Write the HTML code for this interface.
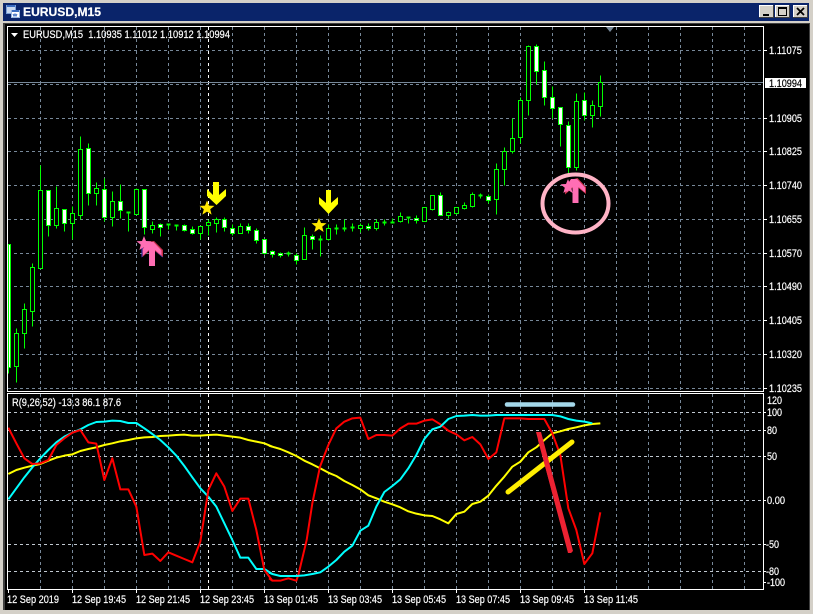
<!DOCTYPE html>
<html>
<head>
<meta charset="utf-8">
<style>
html,body{margin:0;padding:0;background:#000;width:813px;height:614px;overflow:hidden}
svg{display:block;position:absolute;left:0;top:0}
text{font-family:"Liberation Sans",sans-serif;font-size:11px;fill:#fff;stroke:#fff;stroke-width:.2px}
</style>
</head>
<body>
<svg width="813" height="614" viewBox="0 0 813 614" xmlns="http://www.w3.org/2000/svg">
<defs>
<clipPath id="c1"><rect x="8" y="27" width="755" height="364"/></clipPath>
<clipPath id="c2"><rect x="8" y="394" width="755" height="195"/></clipPath>
</defs>
<!-- window frame -->
<rect width="813" height="614" fill="#d4d0c8"/>
<rect x="3" y="3" width="806" height="18" fill="#0a246a"/>
<rect x="3" y="21" width="806" height="2" fill="#d4d0c8"/>
<rect x="3" y="23" width="807" height="587" fill="#404040"/>
<rect x="5" y="24" width="804" height="586" fill="#000"/>
<!-- title icon -->
<rect x="6.5" y="5.5" width="9" height="8" fill="#c8d8f0" stroke="#7aa0d8"/>
<rect x="7" y="5" width="8" height="2" fill="#3a6cc0"/>
<rect x="11.5" y="10.5" width="8" height="7" fill="#fff" stroke="#9ab8e0"/>
<rect x="12" y="10" width="7" height="2" fill="#3a6cc0"/>
<path d="M13 14l1 2 1-2 1 2 1-2" fill="none" stroke="#3a6cc0"/>
<text x="23" y="16" style="font-size:12px;font-weight:bold" textLength="78" lengthAdjust="spacingAndGlyphs">EURUSD,M15</text>
<!-- buttons -->
<g>
<rect x="759" y="5" width="15" height="13" fill="#d4d0c8"/>
<path d="M759.5 18V5.5H774" fill="none" stroke="#fff"/><path d="M759 17.500H773.500V5" fill="none" stroke="#404040"/>
<rect x="763" y="14" width="6" height="2" fill="#000"/>
<rect x="775" y="5" width="15" height="13" fill="#d4d0c8"/>
<path d="M775.500 18V5.500H790" fill="none" stroke="#fff"/><path d="M775 17.500H789.500V5" fill="none" stroke="#404040"/>
<rect x="778.500" y="7.500" width="8" height="8" fill="none" stroke="#000"/><rect x="778" y="7" width="9" height="2" fill="#000"/>
<rect x="793" y="5" width="15" height="13" fill="#d4d0c8"/>
<path d="M793.500 18V5.500H808" fill="none" stroke="#fff"/><path d="M793 17.500H807.500V5" fill="none" stroke="#404040"/>
<path d="M797 8l7 7M804 8l-7 7" stroke="#000" stroke-width="1.800" fill="none"/>
</g>
<!-- panels -->
<rect x="7.500" y="26.500" width="756" height="365" fill="#000" stroke="#fff"/>
<rect x="7.500" y="393.500" width="756" height="196" fill="#000" stroke="#fff"/>
<!-- grid main -->
<g clip-path="url(#c1)" shape-rendering="crispEdges">
<path fill="none" stroke="#778899" stroke-dasharray="3 3" d="M8 50.500H763M8 84.500H763M8 118.500H763M8 151.500H763M8 185.500H763M8 219.500H763M8 253.500H763M8 286.500H763M8 320.500H763M8 354.500H763M8 388.500H763M40.500 27V391M72.500 27V391M104.500 27V391M136.500 27V391M168.500 27V391M200.500 27V391M232.500 27V391M264.500 27V391M296.500 27V391M328.500 27V391M360.500 27V391M392.500 27V391M424.500 27V391M456.500 27V391M488.500 27V391M520.500 27V391M552.500 27V391M584.500 27V391M616.500 27V391M648.500 27V391M680.500 27V391M712.500 27V391M744.500 27V391"/>
<path fill="none" stroke="#fff" stroke-dasharray="3 3" d="M208.500 27V391"/>
<path fill="none" stroke="#778899" d="M8 82.500H763"/>
<g transform="translate(.5,.5)">
<path fill="none" stroke="#0f0" d="M8 244V373M16 328V382M24 303V348M32 263V326M40 165V268M48 190V236M56 186V228M64 209V231M72 206V239M80 136V219M88 143V205M96 182V205M104 178V221M112 191V226M120 184V218M128 212V231M136 188V214M144 189V234M152 221V233M160 223V236M168 223V229M176 224V230M184 224V231M192 226V234M200 226V239M208 219V235M216 217V232M224 217V231M232 224V235M240 223V233M248 223V233M256 228V243M264 239V254M272 250V257M280 252V257M288 251V256M296 253V264M304 227V259M312 234V249M320 235V256M328 224V240M336 224V234M344 219V231M352 223V231M360 223V232M368 223V230M376 219V230M384 219V225M392 218V223M400 212V222M408 216V223M416 215V223M424 207V221M432 195V210M440 192V215M448 211V218M456 207V214M464 202V209M472 192V207M480 193V198M488 194V203M496 163V214M504 147V185M512 118V153M520 97V143M528 45V115M536 44V84M544 61V105M552 86V118M560 107V146M568 121V173M576 93V170M584 92V120M592 100V127M600 75V116"/>
<path fill="#000" stroke="#0f0" d="M14 333h4v33h-4zM22 309h4v24h-4zM30 267h4v44h-4zM38 190h4v78h-4zM54 208h4v17h-4zM70 213h4v10h-4zM78 149h4v66h-4zM94 188h4v5h-4zM110 201h4v16h-4zM134 189h4v25h-4zM150 225h4v4h-4zM198 226h4v7h-4zM206 222h4v3h-4zM214 219h4v4h-4zM238 226h4v7h-4zM302 235h4v24h-4zM326 228h4v11h-4zM358 225h4v3h-4zM374 222h4v6h-4zM398 216h4v5h-4zM422 207h4v14h-4zM430 195h4v14h-4zM454 207h4v6h-4zM470 194h4v12h-4zM494 169h4v30h-4zM502 151h4v18h-4zM510 138h4v13h-4zM518 100h4v37h-4zM526 46h4v54h-4zM574 101h4v66h-4zM590 105h4v10h-4zM598 82h4v24h-4zM446 212h4v3h-4zM462 205h4v3h-4z"/>
<path fill="#fff" stroke="#0f0" d="M8 244h2v123h-2zM46 190h4v35h-4zM62 209h4v14h-4zM86 148h4v45h-4zM102 189h4v28h-4zM118 201h4v9h-4zM142 189h4v38h-4zM158 224h4v3h-4zM182 225h4v5h-4zM190 229h4v4h-4zM222 219h4v8h-4zM230 228h4v5h-4zM246 226h4v4h-4zM254 230h4v10h-4zM262 239h4v14h-4zM270 251h4v3h-4zM278 253h4v2h-4zM294 255h4v5h-4zM310 236h4v3h-4zM366 226h4v2h-4zM414 218h4v2h-4zM438 195h4v20h-4zM486 196h4v4h-4zM534 46h4v25h-4zM542 70h4v27h-4zM550 97h4v11h-4zM558 107h4v17h-4zM566 125h4v42h-4zM582 100h4v15h-4z"/>
<path fill="none" stroke="#0f0" stroke-width="2" d="M126 212h4M166 224h4M174 225h4M286 253h4M318 239h4M334 228h4M342 228h4M350 227h4M382 222h4M390 222h4M406 217h4M478 195h4"/>
</g>
</g>
<!-- markers: yellow arrows and stars -->
<g>
<polygon points="213,182 219,182 219,195 226,189 226,196 216.500,205 207,196 207,189 213,195" fill="#ffff00"/>
<polygon points="207,200.500 209,205.600 214.500,205.900 210.200,209.300 211.600,214.600 207,211.600 202.400,214.600 203.800,209.300 199.500,205.900 205,205.600" fill="#ffe800"/>
<polygon points="326,190 331,190 331,203 338,197 338,204 328.500,214 319,204 319,197 326,203" fill="#ffff00"/>
<polygon points="319,218 321,223 326.500,223.300 322.200,226.700 323.600,232 319,229 314.400,232 315.800,226.700 311.500,223.300 317,223" fill="#ffe800"/>
</g>
<!-- pink arrow 1 -->
<polygon id="pa" points="147,243 154,241 162.500,250 162.500,257.500 155,251 155,266 149,266 149,251 141.500,257.500 141.500,249" fill="#4040d0"/>
<polygon points="147,242 154,241 163,250 163,257 155,251 155,266 149,266 149,251 142.500,257 142.500,249" fill="#c83048"/>
<polygon points="147.500,242 153.500,242 161.500,250.500 161.500,255.500 155,250 155,266 149,266 149,250 143,255.500 143,249" fill="#ff6eb4"/>
<polygon points="144,236 146,241 151.500,241.300 147.200,244.700 148.600,250 144,247 139.400,250 140.800,244.700 136.500,241.300 142,241" fill="#ff6eb4"/>
<!-- pink circle + arrow 2 -->
<ellipse cx="575.500" cy="203.500" rx="33" ry="29" fill="none" stroke="#ffb3c6" stroke-width="4"/>
<polygon points="570.500,180 577.500,178 586,187 586,194 578.500,188 578.500,203 572.500,203 572.500,188 565,194.500 565,186" fill="#c83048"/>
<polygon points="571,179 577,179 585,187.500 585,192.500 578.500,187 578.500,203 572.500,203 572.500,187 566.500,192.500 566.500,186" fill="#ff6eb4"/>
<polygon points="568,179 570,184 575.500,184.300 571.200,187.700 572.600,193 568,190 563.400,193 564.800,187.700 560.500,184.300 566,184" fill="#ff6eb4"/>
<!-- top labels -->
<polygon points="11,33 18,33 14.500,37" fill="#fff"/>
<polygon points="606,27 614,27 610,32" fill="#778899"/>
<text x="23" y="38" textLength="207" lengthAdjust="spacingAndGlyphs" xml:space="preserve">EURUSD,M15  1.10935 1.11012 1.10912 1.10994</text>
<!-- right axis main -->
<g>
<text x="769" y="54" textLength="33" lengthAdjust="spacingAndGlyphs">1.11075</text>
<text x="769" y="122" textLength="33" lengthAdjust="spacingAndGlyphs">1.10905</text>
<text x="769" y="155" textLength="33" lengthAdjust="spacingAndGlyphs">1.10825</text>
<text x="769" y="189" textLength="33" lengthAdjust="spacingAndGlyphs">1.10740</text>
<text x="769" y="223" textLength="33" lengthAdjust="spacingAndGlyphs">1.10655</text>
<text x="769" y="257" textLength="33" lengthAdjust="spacingAndGlyphs">1.10570</text>
<text x="769" y="290" textLength="33" lengthAdjust="spacingAndGlyphs">1.10490</text>
<text x="769" y="324" textLength="33" lengthAdjust="spacingAndGlyphs">1.10405</text>
<text x="769" y="358" textLength="33" lengthAdjust="spacingAndGlyphs">1.10320</text>
<text x="769" y="392" textLength="33" lengthAdjust="spacingAndGlyphs">1.10235</text>
<rect x="765" y="78" width="41" height="10" fill="#fff"/>
<text x="769" y="87" textLength="33" lengthAdjust="spacingAndGlyphs" style="fill:#000;stroke:#000">1.10994</text>
<path d="M764 50.500h3M764 118.500h3M764 151.500h3M764 185.500h3M764 219.500h3M764 253.500h3M764 286.500h3M764 320.500h3M764 354.500h3M764 388.500h3" stroke="#fff" fill="none"/>
</g>
<!-- indicator panel -->
<g clip-path="url(#c2)">
<path shape-rendering="crispEdges" fill="none" stroke="#778899" stroke-dasharray="3 3" d="M40.500 394V589M72.500 394V589M104.500 394V589M136.500 394V589M168.500 394V589M200.500 394V589M232.500 394V589M264.500 394V589M296.500 394V589M328.500 394V589M360.500 394V589M392.500 394V589M424.500 394V589M456.500 394V589M488.500 394V589M520.500 394V589M552.500 394V589M584.500 394V589M616.500 394V589M648.500 394V589M680.500 394V589M712.500 394V589M744.500 394V589"/>
<path shape-rendering="crispEdges" fill="none" stroke="#c0c8d0" stroke-dasharray="3 3" d="M8 412.500H763M8 430.500H763M8 456.500H763M8 500.500H763M8 544.500H763M8 571.500H763"/>
<path shape-rendering="crispEdges" fill="none" stroke="#fff" stroke-dasharray="3 3" d="M208.500 394V589"/>
<!-- zoomed coordinate groups -->
<g transform="translate(0,390) scale(.33333)" fill="none" stroke-width="6" stroke-linejoin="round">
<polyline stroke="#ffff00" points="25,252 49,240 73,233 97,227 121,222 145,212 169,203 193,197 217,193 241,183 265,177 289,172 313,165 337,160 361,154 385,150 409,145 433,142 457,141 481,138 505,137 529,135 553,134 577,137 601,137 625,135 649,134 673,137 697,140 721,143 745,150 769,155 793,160 817,170"/>
<polyline stroke="#00ffff" points="25,328 49,295 73,262 97,232 121,205 145,180 169,157 193,140 217,128 241,118 265,105 289,96 313,95 337,92 361,93 385,99 409,99 433,115 457,132 481,150 505,172 529,197 553,228 577,262 601,295 625,320 649,350 673,400 697,450 721,503 745,503 769,537 793,537 817,552"/>
<polyline stroke="#ff0000" points="25,113 49,160 73,205 97,222 121,220 145,210 169,165 193,145 217,128 241,120 265,157 289,161 313,270 337,205 361,298 385,298 409,350 433,495 457,491 481,513 505,487 529,497 553,507 577,517 601,455 625,300 649,250 673,290 697,363 721,326 745,326 769,420 793,540 817,572"/>
</g>
<g transform="translate(270,390) scale(.33333)" fill="none" stroke-width="6" stroke-linejoin="round">
<polyline stroke="#ffff00" points="-3,167 7,170 31,177 55,187 79,198 103,212 127,223 151,235 175,248 199,258 223,273 247,285 271,298 295,316 319,325 343,335 367,343 391,352 415,364 439,371 463,376 487,378 511,388 535,400 559,372 583,365 607,342 631,335 655,317 679,287 703,260 727,230 751,215 775,187 799,172 823,150 847,130 871,124 895,117 919,112 943,106 967,102 991,100"/>
<polyline stroke="#ff0000" points="-3,565 7,572 31,572 55,565 79,572 85,555 110,450 127,340 150,230 175,165 199,115 223,95 247,85 271,83 295,147 319,135 343,135 367,137 391,115 415,101 439,101 463,92 487,88 511,103 535,122 559,133 583,151 607,141 631,163 655,207 679,187 703,85 727,85 751,85 775,87 799,87 823,87 847,130 871,195 895,355 919,420 943,522 967,490 991,367"/>
<polyline stroke="#00ffff" points="-3,548 7,552 31,558 55,558 79,558 103,556 127,552 151,547 175,530 199,510 223,485 247,467 271,422 295,407 319,350 343,306 367,288 391,268 415,235 439,195 463,147 487,118 511,110 535,87 559,78 583,77 607,75 631,77 655,77 679,75 703,75 847,75 871,79 895,87 919,92 943,95 967,100"/>
</g>
<!-- hand drawn -->
<line x1="507" y1="404.500" x2="573" y2="404.500" stroke="#a5d8ea" stroke-width="4.500" stroke-linecap="round"/>
<line x1="508" y1="492" x2="572" y2="442" stroke="#ffee00" stroke-width="5" stroke-linecap="round"/>
<polygon points="536,432 541,432 573,551 571,553 568,553" fill="#ed2232"/>
<line x1="540" y1="440" x2="570" y2="551" stroke="#ed2232" stroke-width="4" stroke-linecap="round"/>
</g>
<text x="12" y="406" textLength="109" lengthAdjust="spacingAndGlyphs">R(9,26,52) -13.3 86.1 87.6</text>
<!-- right axis sub -->
<text x="767" y="404" textLength="15" lengthAdjust="spacingAndGlyphs">120</text>
<text x="767" y="416" textLength="15" lengthAdjust="spacingAndGlyphs">100</text>
<text x="767" y="434" textLength="10" lengthAdjust="spacingAndGlyphs">80</text>
<text x="767" y="460" textLength="10" lengthAdjust="spacingAndGlyphs">50</text>
<text x="767" y="504" textLength="18" lengthAdjust="spacingAndGlyphs">0.00</text>
<text x="766" y="548" textLength="13" lengthAdjust="spacingAndGlyphs">-50</text>
<text x="766" y="575" textLength="13" lengthAdjust="spacingAndGlyphs">-80</text>
<text x="767" y="586" textLength="18" lengthAdjust="spacingAndGlyphs">-100</text>
<path d="M764 412.500h2M764 430.500h2M764 456.500h2M764 500.500h2M764 544.500h2M764 571.500h2M764 582.500h2" stroke="#fff" fill="none"/>
<!-- time axis -->
<path d="M8.500 590v3M72.500 590v3M136.500 590v3M200.500 590v3M264.500 590v3M328.500 590v3M392.500 590v3M456.500 590v3M520.500 590v3M584.500 590v3" stroke="#fff" fill="none"/>
<text x="7" y="603" textLength="52" lengthAdjust="spacingAndGlyphs">12 Sep 2019</text>
<text x="72" y="603" textLength="54" lengthAdjust="spacingAndGlyphs">12 Sep 19:45</text>
<text x="136" y="603" textLength="54" lengthAdjust="spacingAndGlyphs">12 Sep 21:45</text>
<text x="200" y="603" textLength="54" lengthAdjust="spacingAndGlyphs">12 Sep 23:45</text>
<text x="264" y="603" textLength="54" lengthAdjust="spacingAndGlyphs">13 Sep 01:45</text>
<text x="328" y="603" textLength="54" lengthAdjust="spacingAndGlyphs">13 Sep 03:45</text>
<text x="392" y="603" textLength="54" lengthAdjust="spacingAndGlyphs">13 Sep 05:45</text>
<text x="456" y="603" textLength="54" lengthAdjust="spacingAndGlyphs">13 Sep 07:45</text>
<text x="520" y="603" textLength="54" lengthAdjust="spacingAndGlyphs">13 Sep 09:45</text>
<text x="584" y="603" textLength="54" lengthAdjust="spacingAndGlyphs">13 Sep 11:45</text>
</svg>
</body>
</html>
